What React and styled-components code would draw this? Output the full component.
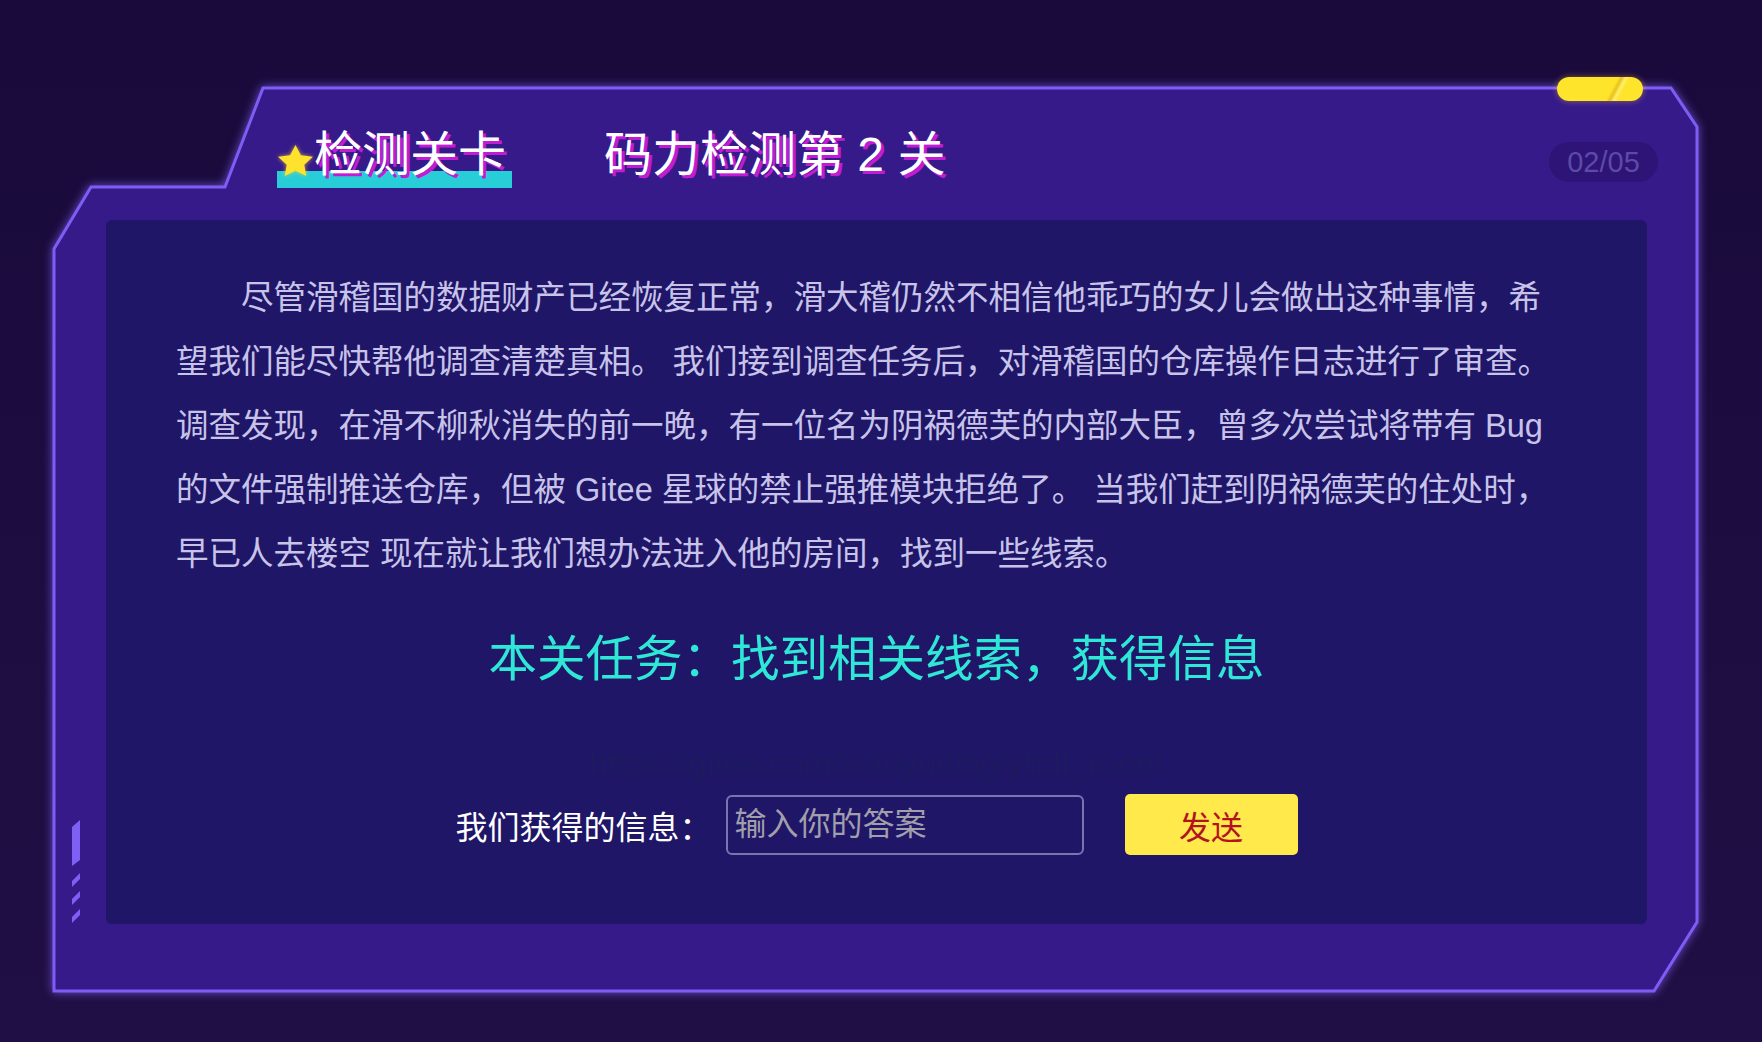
import React from 'react'
import styled, { createGlobalStyle } from 'styled-components';

const GlobalStyle = createGlobalStyle`
    html, body {
        margin: 0;
        padding: 0;
    }
    body {
        width: 1762px;
        height: 1042px;
        overflow: hidden;
        background: linear-gradient(180deg, #190a3b 0%, #1d0d41 60%, #200f44 100%);
        font-family: "Liberation Sans", "Noto Sans CJK SC", sans-serif;
    }
`

const Page = styled.div `
    box-sizing: border-box;
    height: 1042px;
    padding: 88px 0 0 54px;
`

const Frame = styled.section `
    position: relative;
    width: 1643px;
    height: 903px;
    display: flex;
    flex-direction: column;
`

const FrameShape = styled.svg `
    position: absolute;
    left: 0;
    top: 0;
    overflow: visible;
    filter: drop-shadow(0 0 5px rgba(124, 92, 242, 0.8));
    z-index: 0;
`

const Pill = styled.div `
    position: absolute;
    left: 1503px;
    top: -11px;
    width: 86px;
    height: 24px;
    border-radius: 12px;
    background: linear-gradient(118deg, #ffe42c 0%, #ffe42c 62%, #e9c21a 66%, #fff06a 70%, #ffe42c 74%, #ffe42c 100%);
    box-shadow: 0 0 6px rgba(255, 200, 40, 0.45);
    z-index: 2;
`

const SideMarks = styled.svg `
    position: absolute;
    left: 18px;
    top: 732px;
    z-index: 1;
`

const Header = styled.header `
    position: relative;
    z-index: 1;
    box-sizing: border-box;
    height: 132px;
    padding: 43px 39px 0 223px;
    display: flex;
    align-items: flex-start;
`

const Tab = styled.div `
    position: relative;
    display: flex;
    align-items: flex-start;
    &::before {
        content: "";
        position: absolute;
        left: 0;
        top: 40px;
        width: 235px;
        height: 17px;
        background: #27ced8;
    }
`

const Star = styled.svg `
    position: relative;
    margin: 14px 1px 0 1px;
    filter: drop-shadow(0 0 2px rgba(255, 220, 40, 0.7));
`

const Title = styled.h1 `
    position: relative;
    margin: 0 0 0 ${p => p.$offset || 0}px;
    font-size: 48px;
    line-height: 48px;
    font-weight: normal;
    color: #ffffff;
    white-space: pre;
    text-shadow: 3px 3px 0 #c11cd4;
`

const Counter = styled.div `
    margin: 11px 0 0 auto;
    width: 109px;
    height: 40px;
    border-radius: 20px;
    background: rgba(20, 8, 70, 0.28);
    color: #5d4aa6;
    font-size: 29px;
    line-height: 40px;
    text-align: center;
`

const Panel = styled.main `
    position: relative;
    z-index: 1;
    box-sizing: border-box;
    height: 704px;
    margin: 0 50px 0 52px;
    padding-top: 46px;
    background: #1f1668;
    border-radius: 6px;
    display: flex;
    flex-direction: column;
    align-items: center;
`

const Story = styled.p `
    align-self: flex-start;
    width: 1386px;
    margin: 0 0 0 70px;
    font-size: 32.5px;
    line-height: 64px;
    text-indent: 2em;
    color: #c8c3e9;
`

const Mission = styled.h2 `
    margin: 41px 0 0;
    font-size: 48.5px;
    line-height: 64px;
    font-weight: normal;
    color: #2fe7d6;
`

const Hint = styled.p `
    margin: 53px 0 0;
    font-size: 33px;
    line-height: 40px;
    color: #1d1a5f;
`

const AnswerRow = styled.form `
    margin-top: 10px;
    display: flex;
    align-items: center;
`

const Label = styled.label `
    margin-right: 14px;
    font-size: 32px;
    color: #ffffff;
`

const AnswerInput = styled.input `
    box-sizing: border-box;
    width: 358px;
    height: 60px;
    padding: 0 7px;
    border: 2px solid rgba(185, 180, 225, 0.6);
    border-radius: 6px;
    background: transparent;
    color: #ffffff;
    font-family: "Liberation Sans", "Noto Sans CJK SC", sans-serif;
    font-size: 32px;
    outline: none;
    &::placeholder {
        color: #a19fab;
    }
`

const SendButton = styled.button `
    margin-left: 41px;
    width: 173px;
    height: 61px;
    border: none;
    border-radius: 5px;
    background: #ffe94b;
    color: #b3131f;
    font-family: "Liberation Sans", "Noto Sans CJK SC", sans-serif;
    font-size: 32px;
    cursor: pointer;
`

const framePoints = "209,0 1617,0 1643,39 1643,834 1600,903 0,903 0,161 37,99 171,99"

const App = () => {
    return (
        <Page>
            <GlobalStyle />
            <Frame>
                <FrameShape width="1643" height="903" viewBox="0 0 1643 903">
                    <polygon points={framePoints} fill="#361a8a" stroke="#7d5df4" strokeWidth="3" strokeLinejoin="miter" />
                </FrameShape>
                <Pill />
                <SideMarks width="8" height="103" viewBox="0 0 8 103">
                    <g fill="#7f60f4">
                        <polygon points="0,7 8,0 8,40 0,46" />
                        <polygon points="0,61 8,53 8,59 0,67" />
                        <polygon points="0,79 8,71 8,77 0,85" />
                        <polygon points="0,97 8,89 8,95 0,103" />
                    </g>
                </SideMarks>
                <Header>
                    <Tab>
                        <Star width="35" height="31" viewBox="2 2 20 19.02" preserveAspectRatio="none">
                            <polygon points="12,2 15.09,8.26 22,9.27 17,14.14 18.18,21.02 12,17.77 5.82,21.02 7,14.14 2,9.27 8.91,8.26" fill="#ffe22e" />
                        </Star>
                        <Title>检测关卡</Title>
                    </Tab>
                    <Title $offset={98}>码力检测第 2 关</Title>
                    <Counter>02/05</Counter>
                </Header>
                <Panel>
                    <Story>
                        尽管滑稽国的数据财产已经恢复正常，滑大稽仍然不相信他乖巧的女儿会做出这种事情，希望我们能尽快帮他调查清楚真相。 我们接到调查任务后，对滑稽国的仓库操作日志进行了审查。调查发现，在滑不柳秋消失的前一晚，有一位名为阴祸德芙的内部大臣，曾多次尝试将带有 Bug 的文件强制推送仓库，但被 Gitee 星球的禁止强推模块拒绝了。 当我们赶到阴祸德芙的住处时，早已人去楼空 现在就让我们想办法进入他的房间，找到一些线索。
                    </Story>
                    <Mission>本关任务：找到相关线索，获得信息</Mission>
                    <Hint>https://gitee.com/xiaoyuding/yhdf_room</Hint>
                    <AnswerRow onSubmit={e => e.preventDefault()}>
                        <Label htmlFor="answer">我们获得的信息：</Label>
                        <AnswerInput id="answer" placeholder="输入你的答案" />
                        <SendButton type="submit">发送</SendButton>
                    </AnswerRow>
                </Panel>
            </Frame>
        </Page>
    )
}

export default App;
